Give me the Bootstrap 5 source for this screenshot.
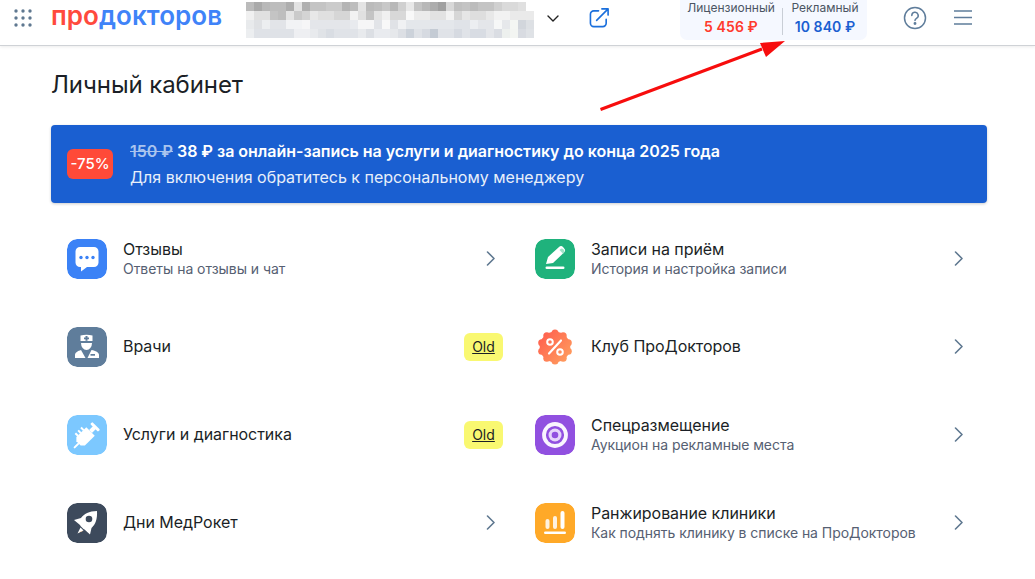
<!DOCTYPE html>
<html lang="ru">
<head>
<meta charset="utf-8">
<title>Личный кабинет</title>
<link href="https://cdn.jsdelivr.net/npm/bootstrap@5.3.0/dist/css/bootstrap.min.css" rel="stylesheet">
<style>
html,body{height:579px;overflow:hidden;background:#fff;}
body{font-family:"Inter","Liberation Sans",sans-serif;color:#1b1f26;position:relative;}
.topbar{height:46px;border-bottom:1px solid #cfd2d6;box-shadow:0 1px 3px rgba(0,0,0,.08);padding-left:14px;}
.apps-ic{width:18px;height:18px;margin-right:19px;margin-top:-10px;flex:none;}
.brand{font-family:"Inter","Liberation Sans",sans-serif;font-weight:600;font-size:26px;letter-spacing:.06px;line-height:1;width:175px;color:#3f83f8;margin-top:-13px;flex:none;white-space:nowrap;}
.brand span{color:#ff4a3d;}
.mosaic{margin-left:20px;margin-top:-5px;flex:none;display:block;}
.caret-ic{margin-left:13px;margin-top:-9px;flex:none;}
.ext-ic{margin-left:30px;margin-top:-10px;flex:none;}
.balance{position:relative;margin-left:70px;margin-top:-6px;width:187px;height:40px;background:#f5f8ff;border-radius:0 0 7px 7px;flex:none;}
.bal-col{text-align:center;font-size:12px;line-height:16px;color:#4b5563;}
.bal-col:first-child{width:103px;border-right:1px solid #c9ced6;height:27px;margin-top:8px;}
.bal-col:first-child .bal-lab{margin-top:-8px;}
.bal-col:last-child{flex:1;}
.bal-lab{display:block;}
.bal-val{display:block;font-size:14px;font-weight:600;line-height:20px;margin-top:1px;letter-spacing:.1px;}
.v-red{color:#ff3a2d;}
.v-blue{color:#1a5fd1;}
.help-ic{margin-left:36px;margin-top:-10px;flex:none;}
.burger-ic{margin-left:27px;margin-top:-10px;flex:none;}
.page-main{padding:0 48px 0 51px;}
.page-title{font-size:24px;font-weight:400;line-height:30px;margin:24px 0 25px;letter-spacing:-.08px;}
.promo{height:78px;background:#1a5fd1;border-radius:4px;color:#fff;padding-left:16px;box-shadow:0 1px 3px rgba(0,0,0,.2);}
.promo-badge{width:46px;height:30px;background:#ff4a38;border-radius:6px;font-size:15px;font-weight:500;margin-right:17px;flex:none;}
.promo-top{font-size:16px;font-weight:600;line-height:22px;letter-spacing:-.02px;}
.promo-top s{color:#a9c4ee;font-weight:600;}
.promo-sub{font-size:16px;line-height:22px;margin-top:4px;color:#e8effa;}
.menu-grid{display:grid;grid-template-columns:468px 468px;grid-auto-rows:88px;margin-top:12px;}
.menu-item{padding:0 24px 0 16px;color:#1b1f26;text-decoration:none;}
.tile{width:40px;height:40px;border-radius:10px;flex:none;display:block;margin-right:16px;}
.menu-text{margin-top:-1px;}
.menu-name{font-size:16px;line-height:20px;letter-spacing:-.05px;}
.menu-name:only-child{margin-top:-1px;}
.menu-desc{font-size:14px;line-height:19px;color:#566072;letter-spacing:-.05px;}
.old-tag{width:39px;height:28px;background:#f9f871;border-radius:6px;color:#1b1f26;font-size:14px;text-decoration:underline;margin-right:-8px;margin-top:-1px;flex:none;}
.chev{flex:none;margin-top:-2px;}
.note-arrow{position:absolute;left:590px;top:30px;pointer-events:none;}
</style>
</head>
<body>
<header class="topbar d-flex align-items-center">
  <svg class="apps-ic" viewBox="0 0 18 18" fill="#5f7890"><circle cx="2" cy="2" r="1.7"/><circle cx="9" cy="2" r="1.7"/><circle cx="16" cy="2" r="1.7"/><circle cx="2" cy="9" r="1.7"/><circle cx="9" cy="9" r="1.7"/><circle cx="16" cy="9" r="1.7"/><circle cx="2" cy="16" r="1.7"/><circle cx="9" cy="16" r="1.7"/><circle cx="16" cy="16" r="1.7"/></svg>
  <div class="brand"><span>про</span>докторов</div>
  <svg class="mosaic" width="288" height="36" viewBox="0 0 36 4" preserveAspectRatio="none" shape-rendering="crispEdges">
    <g id="r0"><rect x="0" y="0" width="1" height="1" fill="#bbb"/><rect x="1" y="0" width="1" height="1" fill="#a9a9a9"/><rect x="2" y="0" width="1" height="1" fill="#b8b8b8"/><rect x="3" y="0" width="2" height="1" fill="#bdbdbd"/><rect x="5" y="0" width="1" height="1" fill="#aeaeae"/><rect x="6" y="0" width="1" height="1" fill="#e3e3e3"/><rect x="7" y="0" width="1" height="1" fill="#b0b0b0"/><rect x="8" y="0" width="2" height="1" fill="#c4c4c4"/><rect x="10" y="0" width="2" height="1" fill="#cbcbcb"/><rect x="12" y="0" width="1" height="1" fill="#b4b4b4"/><rect x="13" y="0" width="1" height="1" fill="#bdbdbd"/><rect x="14" y="0" width="1" height="1" fill="#e4e4e4"/><rect x="15" y="0" width="1" height="1" fill="#bbb"/><rect x="16" y="0" width="1" height="1" fill="#bfbfbf"/><rect x="17" y="0" width="1" height="1" fill="#c8c8c8"/><rect x="18" y="0" width="1" height="1" fill="#b8b8b8"/><rect x="19" y="0" width="1" height="1" fill="#d0d0d0"/><rect x="20" y="0" width="1" height="1" fill="#e8e8e8"/><rect x="21" y="0" width="1" height="1" fill="#c4c4c4"/><rect x="22" y="0" width="1" height="1" fill="#b8b8b8"/><rect x="23" y="0" width="1" height="1" fill="#adadad"/><rect x="24" y="0" width="1" height="1" fill="#a0a0a0"/><rect x="25" y="0" width="1" height="1" fill="#d8d8d8"/><rect x="26" y="0" width="1" height="1" fill="#c0c0c0"/><rect x="27" y="0" width="1" height="1" fill="#c4c4c4"/><rect x="28" y="0" width="1" height="1" fill="#bcbcbc"/><rect x="29" y="0" width="2" height="1" fill="#c4c4c4"/><rect x="31" y="0" width="1" height="1" fill="#d0d0d0"/><rect x="32" y="0" width="2" height="1" fill="#dadada"/><rect x="34" y="0" width="1" height="1" fill="#e0e0e0"/></g>
    <g><rect x="0" y="1" width="1" height="1" fill="#f0f0f0"/><rect x="1" y="1" width="2" height="1" fill="#e0e0e0"/><rect x="3" y="1" width="1" height="1" fill="#c4c4c4"/><rect x="4" y="1" width="1" height="1" fill="#bebebe"/><rect x="5" y="1" width="1" height="1" fill="#e4e4e4"/><rect x="6" y="1" width="1" height="1" fill="#cacaca"/><rect x="7" y="1" width="1" height="1" fill="#d4d4d4"/><rect x="8" y="1" width="1" height="1" fill="#e8e8e8"/><rect x="9" y="1" width="2" height="1" fill="#e0e0e0"/><rect x="11" y="1" width="2" height="1" fill="#d6d6d6"/><rect x="13" y="1" width="1" height="1" fill="#f2f2f2"/><rect x="14" y="1" width="1" height="1" fill="#e0e0e0"/><rect x="15" y="1" width="1" height="1" fill="#c4c4c4"/><rect x="16" y="1" width="1" height="1" fill="#e4e4e4"/><rect x="17" y="1" width="1" height="1" fill="#f0f0f0"/><rect x="18" y="1" width="2" height="1" fill="#d8d8d8"/><rect x="20" y="1" width="1" height="1" fill="#f8f8f8"/><rect x="21" y="1" width="2" height="1" fill="#ebebeb"/><rect x="23" y="1" width="2" height="1" fill="#e2e2e2"/><rect x="25" y="1" width="1" height="1" fill="#f2f2f2"/><rect x="26" y="1" width="1" height="1" fill="#d6d6d6"/><rect x="27" y="1" width="1" height="1" fill="#e6e6e6"/><rect x="28" y="1" width="2" height="1" fill="#dedede"/><rect x="30" y="1" width="1" height="1" fill="#e8e8e8"/><rect x="31" y="1" width="2" height="1" fill="#f2f2f2"/><rect x="33" y="1" width="3" height="1" fill="#eaeaea"/></g>
    <g><rect x="0" y="2" width="1" height="1" fill="#e8eaec"/><rect x="1" y="2" width="1" height="1" fill="#dfe1e4"/><rect x="2" y="2" width="1" height="1" fill="#eceef0"/><rect x="3" y="2" width="2" height="1" fill="#e2e4e8"/><rect x="5" y="2" width="2" height="1" fill="#f2f3f5"/><rect x="7" y="2" width="1" height="1" fill="#f6f6f7"/><rect x="8" y="2" width="5" height="1" fill="#e4e6ea"/><rect x="13" y="2" width="1" height="1" fill="#e8eaee"/><rect x="14" y="2" width="2" height="1" fill="#f6f6f7"/><rect x="16" y="2" width="1" height="1" fill="#e2e4e8"/><rect x="17" y="2" width="1" height="1" fill="#f8f8f8"/><rect x="18" y="2" width="1" height="1" fill="#e0e2e6"/><rect x="19" y="2" width="1" height="1" fill="#f0f1f3"/><rect x="20" y="2" width="6" height="1" fill="#e4e7eb"/><rect x="26" y="2" width="2" height="1" fill="#e0e3e8"/><rect x="28" y="2" width="1" height="1" fill="#eceef1"/><rect x="29" y="2" width="2" height="1" fill="#e4e6ea"/><rect x="31" y="2" width="1" height="1" fill="#f6f7f7"/><rect x="32" y="2" width="1" height="1" fill="#e6e8eb"/><rect x="33" y="2" width="1" height="1" fill="#f4f6f3"/><rect x="34" y="2" width="1" height="1" fill="#d2d6dc"/><rect x="35" y="2" width="1" height="1" fill="#dde0e4"/></g>
    <g><rect x="0" y="3" width="1" height="1" fill="#eceef0"/><rect x="1" y="3" width="5" height="1" fill="#dfe2e7"/><rect x="6" y="3" width="2" height="1" fill="#eeeff2"/><rect x="8" y="3" width="1" height="1" fill="#e8eaed"/><rect x="9" y="3" width="1" height="1" fill="#e0e3e7"/><rect x="10" y="3" width="1" height="1" fill="#d9dde3"/><rect x="11" y="3" width="3" height="1" fill="#e0e3e8"/><rect x="14" y="3" width="1" height="1" fill="#e8eaed"/><rect x="15" y="3" width="1" height="1" fill="#dcdfe4"/><rect x="16" y="3" width="2" height="1" fill="#e9ebef"/><rect x="18" y="3" width="1" height="1" fill="#e6e8eb"/><rect x="19" y="3" width="1" height="1" fill="#dcdfe4"/><rect x="20" y="3" width="1" height="1" fill="#ccd2da"/><rect x="21" y="3" width="1" height="1" fill="#dfe2e7"/><rect x="22" y="3" width="1" height="1" fill="#d6dae1"/><rect x="23" y="3" width="1" height="1" fill="#c4cbd4"/><rect x="24" y="3" width="2" height="1" fill="#e0e3e8"/><rect x="26" y="3" width="1" height="1" fill="#d6dae1"/><rect x="27" y="3" width="1" height="1" fill="#e0e3e8"/><rect x="28" y="3" width="2" height="1" fill="#d8dce3"/><rect x="30" y="3" width="1" height="1" fill="#e4e6ea"/><rect x="31" y="3" width="1" height="1" fill="#dadde3"/><rect x="32" y="3" width="1" height="1" fill="#edf0ee"/><rect x="33" y="3" width="1" height="1" fill="#f3f5f2"/><rect x="34" y="3" width="1" height="1" fill="#d8dbe1"/><rect x="35" y="3" width="1" height="1" fill="#dfe2e6"/></g>
  </svg>
  <svg class="caret-ic" width="12" height="7" viewBox="0 0 12 7" fill="none" stroke="#222" stroke-width="1.4" stroke-linecap="round" stroke-linejoin="round"><path d="M1 1 6 6l5-5"/></svg>
  <svg class="ext-ic" width="21" height="21" viewBox="0 0 22 22" fill="none" stroke="#1a6fdc" stroke-width="1.7" stroke-linecap="round" stroke-linejoin="round"><path d="M10 4H5a3.500 3.500 0 0 0-3.500 3.500V17A3.500 3.500 0 0 0 5 20.500h9.500A3.500 3.500 0 0 0 18 17v-4"/><path d="M8 14 20 2M13.500 2H20v6.500"/></svg>
  <div class="balance d-flex">
    <div class="bal-col"><span class="bal-lab">Лицензионный</span><span class="bal-val v-red">5 456 ₽</span></div>
    <div class="bal-col"><span class="bal-lab">Рекламный</span><span class="bal-val v-blue">10 840 ₽</span></div>
  </div>
  <svg class="help-ic" width="24" height="24" viewBox="0 0 24 24" fill="none" stroke="#5f7d9b" stroke-width="1.5" stroke-linecap="round"><circle cx="12" cy="12" r="10.500"/><path d="M8.800 9.500A3.200 3.200 0 1 1 13.500 12.300c-1 .6-1.500 1.100-1.500 2.200"/><circle cx="12" cy="17.500" r=".7" fill="#5f7d9b"/></svg>
  <svg class="burger-ic" width="18" height="15" viewBox="0 0 18 15" stroke="#5f7d9b" stroke-width="1.500"><path d="M0 1h18M0 7.500h18M0 14h18"/></svg>
</header>

<main class="page-main">
  <h1 class="page-title">Личный кабинет</h1>
  <section class="promo d-flex align-items-center">
    <div class="promo-badge d-flex align-items-center justify-content-center">-75%</div>
    <div>
      <div class="promo-top"><s>150 ₽</s> 38 ₽ за онлайн-запись на услуги и диагностику до конца 2025 года</div>
      <div class="promo-sub">Для включения обратитесь к персональному менеджеру</div>
    </div>
  </section>

  <nav class="menu-grid">
    <a class="menu-item d-flex align-items-center" href="#">
      <svg class="tile" viewBox="0 0 40 40"><rect width="40" height="40" rx="10" fill="#3b82f6"/><path d="M13 8h14a4.500 4.500 0 0 1 4.500 4.500v11a4.500 4.500 0 0 1-4.500 4.500h-7l-6 4.500V28h-1a4.500 4.500 0 0 1-4.500-4.500v-11A4.500 4.500 0 0 1 13 8z" fill="#fff"/><circle cx="14" cy="18.500" r="1.700" fill="#3b82f6"/><circle cx="20" cy="18.500" r="1.700" fill="#3b82f6"/><circle cx="26" cy="18.500" r="1.700" fill="#3b82f6"/></svg>
      <div class="menu-text flex-grow-1"><div class="menu-name">Отзывы</div><div class="menu-desc">Ответы на отзывы и чат</div></div>
      <svg class="chev" width="9" height="15" viewBox="0 0 9 15" fill="none" stroke="#5f7890" stroke-width="1.600" stroke-linecap="round" stroke-linejoin="round"><path d="M1.500 1 8 7.500 1.500 14"/></svg>
    </a>
    <a class="menu-item d-flex align-items-center" href="#">
      <svg class="tile" viewBox="0 0 40 40"><rect width="40" height="40" rx="10" fill="#1fb27c"/><path d="M11 25l2-7 11-10a3 3 0 0 1 4.200.3l1 1.100a3 3 0 0 1-.2 4.200L18 24z" fill="#fff"/><path d="M24.500 11l3.500 3.800 1-1.100a2 2 0 0 0 0-2.600l-1-1a2 2 0 0 0-2.400-.1z" fill="#9fe3c8"/><rect x="10.500" y="27.500" width="19" height="2.500" rx="1.250" fill="#fff"/></svg>
      <div class="menu-text flex-grow-1"><div class="menu-name">Записи на приём</div><div class="menu-desc">История и настройка записи</div></div>
      <svg class="chev" width="9" height="15" viewBox="0 0 9 15" fill="none" stroke="#5f7890" stroke-width="1.600" stroke-linecap="round" stroke-linejoin="round"><path d="M1.500 1 8 7.500 1.500 14"/></svg>
    </a>

    <a class="menu-item d-flex align-items-center" href="#">
      <svg class="tile" viewBox="0 0 40 40"><rect width="40" height="40" rx="10" fill="#5f7d9b"/><path d="M13.500 8.500q6-1.500 12 0v5.500h-12z" fill="#fff"/><path d="M14 16h11a5.500 7 0 0 1-11 0z" fill="#fff"/><path d="M18.500 9h2v1.500H22v1.700h-1.500v1.500h-2v-1.500H17v-1.700h1.500z" fill="#5f7d9b"/><path d="M8 31v-3c0-2.500 3-4 6-5l4.500 8z" fill="#fff"/><path d="M20.500 31l4-8c4 .8 7.500 2.500 7.500 5v3z" fill="#fff"/><rect x="23.500" y="27" width="4.500" height="1.700" fill="#5f7d9b"/></svg>
      <div class="menu-text flex-grow-1"><div class="menu-name">Врачи</div></div>
      <span class="old-tag d-flex align-items-center justify-content-center">Old</span>
    </a>
    <a class="menu-item d-flex align-items-center" href="#">
      <svg class="tile" viewBox="0 0 40 40"><defs><linearGradient id="clubgrad" gradientUnits="userSpaceOnUse" x1="3" y1="5" x2="37" y2="35"><stop offset="0" stop-color="#ff5a4d"/><stop offset="1" stop-color="#ffa25f"/></linearGradient></defs><g fill="url(#clubgrad)"><circle cx="20" cy="20" r="15.300"/><circle cx="20" cy="6" r="3.500"/><circle cx="28.200" cy="8.700" r="3.500"/><circle cx="33.300" cy="15.700" r="3.500"/><circle cx="33.300" cy="24.300" r="3.500"/><circle cx="28.200" cy="31.300" r="3.500"/><circle cx="20" cy="34" r="3.500"/><circle cx="11.800" cy="31.300" r="3.500"/><circle cx="6.700" cy="24.300" r="3.500"/><circle cx="6.700" cy="15.700" r="3.500"/><circle cx="11.800" cy="8.700" r="3.500"/></g><circle cx="15" cy="15" r="2.800" fill="none" stroke="#fff" stroke-width="2"/><circle cx="25" cy="25" r="2.800" fill="none" stroke="#fff" stroke-width="2"/><path d="M26 13.500 14 26.500" stroke="#fff" stroke-width="2.200" stroke-linecap="round"/></svg>
      <div class="menu-text flex-grow-1"><div class="menu-name">Клуб ПроДокторов</div></div>
      <svg class="chev" width="9" height="15" viewBox="0 0 9 15" fill="none" stroke="#5f7890" stroke-width="1.600" stroke-linecap="round" stroke-linejoin="round"><path d="M1.500 1 8 7.500 1.500 14"/></svg>
    </a>

    <a class="menu-item d-flex align-items-center" href="#">
      <svg class="tile" viewBox="0 0 40 40"><rect width="40" height="40" rx="10" fill="#7cc8ff"/><g transform="rotate(-45 20 20)" fill="#fff"><rect x="1.500" y="19" width="7" height="2" rx="1"/><path d="M8 17l3-3h14v12H11l-3-3z"/><rect x="12" y="10.500" width="2" height="4"/><rect x="16" y="10.500" width="2" height="4"/><rect x="20" y="10.500" width="2" height="4"/><rect x="25" y="18" width="6" height="4"/><rect x="30" y="14.500" width="3" height="11" rx="1"/></g></svg>
      <div class="menu-text flex-grow-1"><div class="menu-name">Услуги и диагностика</div></div>
      <span class="old-tag d-flex align-items-center justify-content-center">Old</span>
    </a>
    <a class="menu-item d-flex align-items-center" href="#">
      <svg class="tile" viewBox="0 0 40 40"><rect width="40" height="40" rx="10" fill="#9150e0"/><circle cx="20" cy="20" r="11" fill="none" stroke="#fff" stroke-width="3.800" opacity=".94"/><circle cx="20" cy="20" r="6.500" fill="#e6d5fb"/><circle cx="20" cy="20" r="3.300" fill="#9150e0"/></svg>
      <div class="menu-text flex-grow-1"><div class="menu-name">Спецразмещение</div><div class="menu-desc">Аукцион на рекламные места</div></div>
      <svg class="chev" width="9" height="15" viewBox="0 0 9 15" fill="none" stroke="#5f7890" stroke-width="1.600" stroke-linecap="round" stroke-linejoin="round"><path d="M1.500 1 8 7.500 1.500 14"/></svg>
    </a>

    <a class="menu-item d-flex align-items-center" href="#">
      <svg class="tile" viewBox="0 0 40 40"><rect width="40" height="40" rx="10" fill="#3d4a5c"/><path d="M30 8c-8 0-13 3-16 7l-7 2 6 5 .5 1 3 3 1 .5 5.500 5 1.500-6.500c4-3.500 6-9 5.500-17z" fill="#fff"/><circle cx="22" cy="16" r="3.300" fill="#3d4a5c"/><path d="M13.500 24.500l3 3-6 3z" fill="#fff"/><path d="M11 29.800l5-2.400-1 1.200z" fill="#ffc48a"/></svg>
      <div class="menu-text flex-grow-1"><div class="menu-name">Дни МедРокет</div></div>
      <svg class="chev" width="9" height="15" viewBox="0 0 9 15" fill="none" stroke="#5f7890" stroke-width="1.600" stroke-linecap="round" stroke-linejoin="round"><path d="M1.500 1 8 7.500 1.500 14"/></svg>
    </a>
    <a class="menu-item d-flex align-items-center" href="#">
      <svg class="tile" viewBox="0 0 40 40"><rect width="40" height="40" rx="10" fill="#ffa928"/><g fill="#fff"><rect x="10.500" y="16" width="4" height="10" rx="2" opacity=".85"/><rect x="18" y="13" width="4" height="13" rx="2" opacity=".85"/><rect x="25.500" y="8" width="4" height="18" rx="2"/><rect x="9" y="28.500" width="22" height="2.500" rx="1.250"/></g></svg>
      <div class="menu-text flex-grow-1"><div class="menu-name">Ранжирование клиники</div><div class="menu-desc">Как поднять клинику в списке на ПроДокторов</div></div>
      <svg class="chev" width="9" height="15" viewBox="0 0 9 15" fill="none" stroke="#5f7890" stroke-width="1.600" stroke-linecap="round" stroke-linejoin="round"><path d="M1.500 1 8 7.500 1.500 14"/></svg>
    </a>
  </nav>
</main>

<svg class="note-arrow" width="210" height="90" viewBox="0 0 210 90"><path d="M10.500 79.500 172 19" stroke="#f70d0d" stroke-width="3" fill="none"/><path d="M195 11 176 27 170 13z" fill="#f70d0d"/></svg>
</body>
</html>
